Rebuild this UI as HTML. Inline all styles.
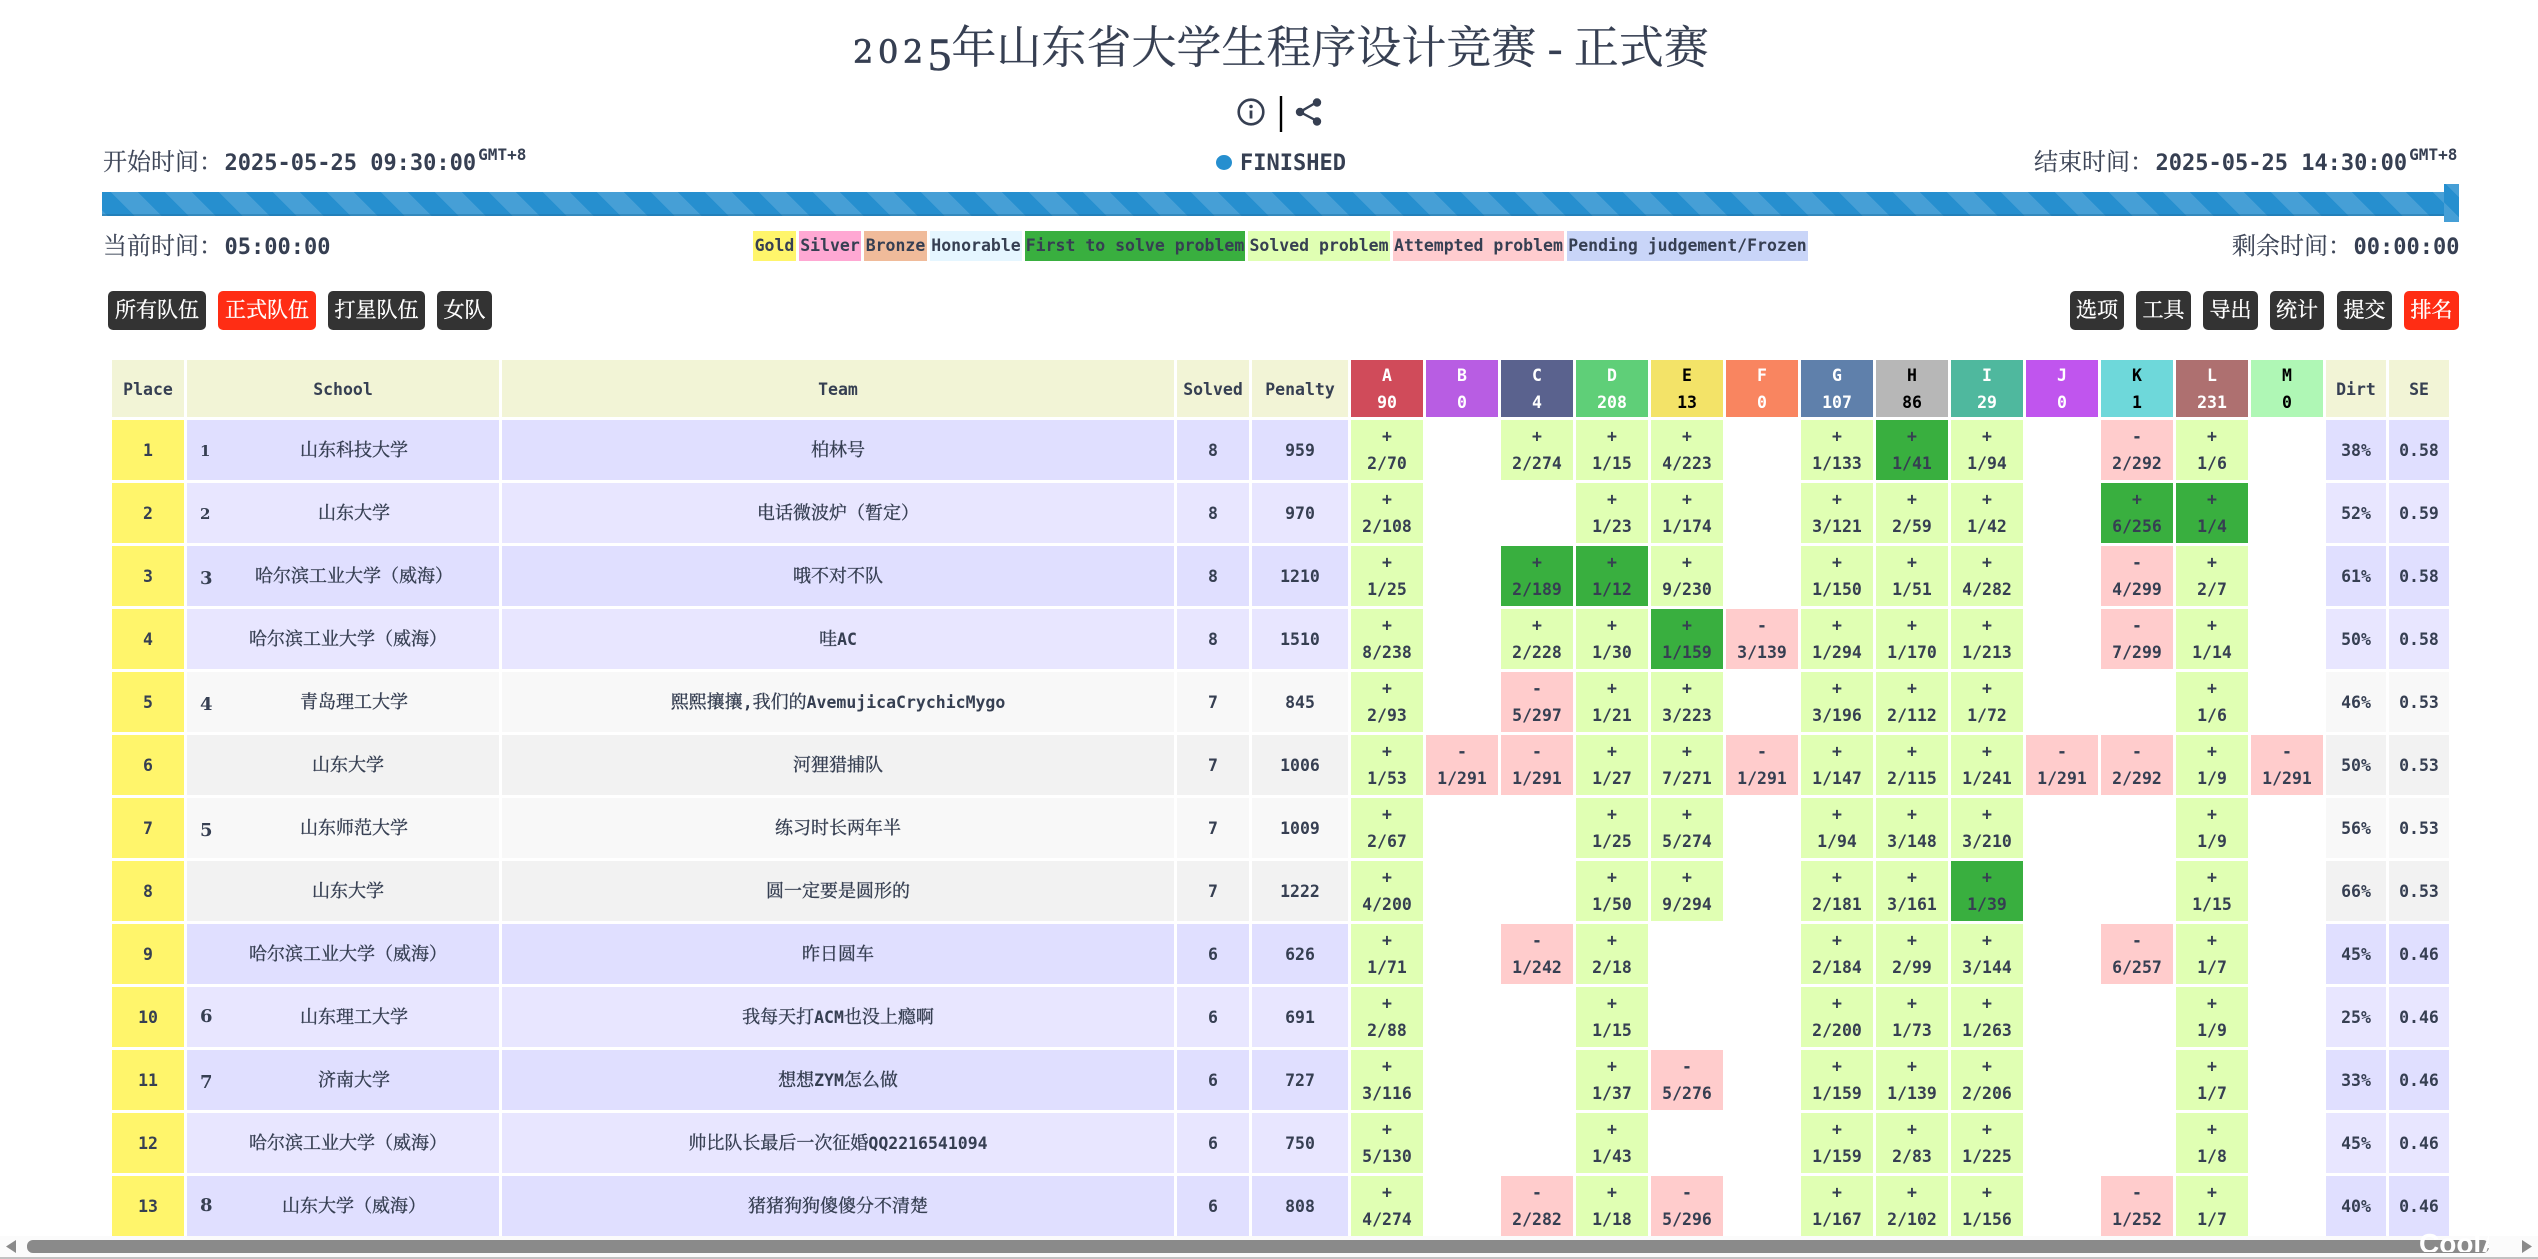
<!DOCTYPE html>
<html lang="zh"><head><meta charset="utf-8"><title>2025年山东省大学生程序设计竞赛 - 正式赛</title>
<style>
html,body{margin:0;padding:0;background:#fff;width:2538px;height:1259px;overflow:hidden}
body{position:relative;color:#363f52;font-family:"DejaVu Sans Mono","Noto Serif CJK SC",monospace}
.abs{position:absolute;white-space:nowrap}
i{font-style:normal;font-weight:400;font-family:"Noto Serif CJK SC","Liberation Serif",serif;line-height:0}
#title{left:853px;top:14px;font:400 45px/60px "Noto Serif CJK SC",serif;-webkit-text-stroke:.2px #363f52}
#title span{line-height:0}
.time{font:bold 22px/30px "DejaVu Sans Mono",monospace}
.time i{font-size:24px;color:#3e4658;-webkit-text-stroke:.15px #3e4658;margin-right:1.5px}
.time sup{font-size:16px;line-height:0;vertical-align:baseline;position:relative;top:-10px;margin-left:2px}
.lg{position:absolute;top:231px;height:30px;font:bold 16.5px/29px "DejaVu Sans Mono",monospace;text-align:center;white-space:nowrap;overflow:hidden}
.btn{position:absolute;top:291px;height:39px;background:#333;color:#fff;border-radius:5px;text-align:center;font:400 21px/36px "Noto Serif CJK SC",serif;-webkit-text-stroke:.35px #fff}
.red{background:#ff2d14}
#bar{left:102px;top:192px;width:2357px;height:24px;background:repeating-linear-gradient(45deg,#469fd6 0 4.24px,#268fcf 4.24px 23.33px,#469fd6 23.33px 38.18px);box-shadow:inset 0 -2px 0 rgba(30,110,160,.45)}
#thumb{left:2444px;top:184px;width:15px;height:38px;background:repeating-linear-gradient(45deg,#469fd6 0 14px,#268fcf 14px 28px)}
table{position:absolute;left:109px;top:357px;border-collapse:separate;border-spacing:3px;table-layout:fixed;width:2343px}
td,th{padding:0;text-align:center;vertical-align:middle;font:bold 16.5px/27px "DejaVu Sans Mono","Noto Serif CJK SC",monospace;overflow:hidden;white-space:nowrap;position:relative}
thead tr{height:57px}
thead th{background:#f2f4d6;padding-top:1px}
th.w{color:#fff}th.k{color:#000}
tbody tr{height:60px}
td i{font-size:18px;-webkit-text-stroke:.35px #363f52}
.p{background:#fff56b}
.s{background:#e0ffb3}.a{background:#ffcccc}.f{background:#39af3f}
.v1{background:#e0dfff}.v2{background:#e8e6ff}.g1{background:#f8f8f8}.g2{background:#f2f2f2}
.sc{padding-left:10px}.sr{padding-left:22px}
.r{position:absolute;left:13px;line-height:20px;font-family:"DejaVu Serif",serif;font-weight:bold}
.r1{font-size:15px;top:21px}.r2{font-size:18px;top:23px}.r3{font-size:18px;top:20px}
</style></head><body>

<div class="abs" id="title"><span style="font:400 32px 'DejaVu Serif',serif;letter-spacing:4.6px;line-height:0;-webkit-text-stroke:.7px #363f52">202</span><span style="font:400 47px 'Liberation Serif',serif;line-height:0;position:relative;top:7px;-webkit-text-stroke:.6px #363f52">5</span>年山东省大学生程序设计竞赛<span style="font:400 45px 'Liberation Serif',serif;line-height:0"> - </span>正式赛</div>

<svg class="abs" style="left:1230px;top:90px" width="100" height="50" viewBox="1230 90 100 50" fill="none">
<circle cx="1251" cy="112" r="12.3" stroke="#363f52" stroke-width="2.6"/>
<circle cx="1251" cy="106.5" r="1.8" fill="#363f52"/>
<path d="M1251 110.5V118.5" stroke="#363f52" stroke-width="2.8"/>
<path d="M1281 96V132" stroke="#000" stroke-width="2.4"/>
<path d="M1317 102L1300 112L1317 121" stroke="#363f52" stroke-width="2.4"/>
<circle cx="1317" cy="102.5" r="4.2" fill="#363f52"/><circle cx="1300" cy="112" r="4.2" fill="#363f52"/><circle cx="1317" cy="121.5" r="4.2" fill="#363f52"/>
</svg>

<div class="abs time" style="left:103px;top:149px"><i>开始时间：</i>2025-05-25 09:30:00<sup>GMT+8</sup></div>
<div class="abs" style="left:1216px;top:155px;width:16px;height:15px;border-radius:50%;background:#268fcf"></div>
<div class="abs time" style="left:1240px;top:149px">FINISHED</div>
<div class="abs time" style="left:2034px;top:149px"><i>结束时间：</i>2025-05-25 14:30:00<sup>GMT+8</sup></div>

<div class="abs" id="bar"></div><div class="abs" id="thumb"></div>

<div class="abs time" style="left:103px;top:233px"><i>当前时间：</i>05:00:00</div>
<div class="abs time" style="left:2232px;top:233px"><i>剩余时间：</i>00:00:00</div>

<div class="lg" style="left:753px;width:43px;background:#fff56b">Gold</div>
<div class="lg" style="left:799px;width:62px;background:#ffa8d3">Silver</div>
<div class="lg" style="left:864px;width:63px;background:#f0bb9a">Bronze</div>
<div class="lg" style="left:930px;width:92px;background:#e5f6ff">Honorable</div>
<div class="lg" style="left:1025px;width:220px;background:#39af3f">First to solve problem</div>
<div class="lg" style="left:1248px;width:142px;background:#e0ffb3">Solved problem</div>
<div class="lg" style="left:1393px;width:171px;background:#ffcccf">Attempted problem</div>
<div class="lg" style="left:1567px;width:241px;background:#c9d5f8">Pending judgement/Frozen</div>

<div class="btn" style="left:108px;width:98px">所有队伍</div>
<div class="btn red" style="left:218px;width:98px">正式队伍</div>
<div class="btn" style="left:328px;width:97px">打星队伍</div>
<div class="btn" style="left:437px;width:55px">女队</div>
<div class="btn" style="left:2070px;width:54px">选项</div>
<div class="btn" style="left:2136px;width:55px">工具</div>
<div class="btn" style="left:2203px;width:55px">导出</div>
<div class="btn" style="left:2270px;width:54px">统计</div>
<div class="btn" style="left:2337px;width:55px">提交</div>
<div class="btn red" style="left:2404px;width:55px">排名</div>

<table>
<colgroup><col style="width:72px"><col style="width:312px"><col style="width:672px"><col style="width:72px"><col style="width:96px"><col style="width:72px"><col style="width:72px"><col style="width:72px"><col style="width:72px"><col style="width:72px"><col style="width:72px"><col style="width:72px"><col style="width:72px"><col style="width:72px"><col style="width:72px"><col style="width:72px"><col style="width:72px"><col style="width:72px"><col style="width:60px"><col style="width:60px"></colgroup>
<thead><tr><th>Place</th><th>School</th><th>Team</th><th>Solved</th><th>Penalty</th>
<th class="w" style="background:#d04b5a">A<br>90</th>
<th class="w" style="background:#b85de3">B<br>0</th>
<th class="w" style="background:#5a628e">C<br>4</th>
<th class="w" style="background:#5fcf78">D<br>208</th>
<th class="k" style="background:#f3e368">E<br>13</th>
<th class="w" style="background:#f98560">F<br>0</th>
<th class="w" style="background:#5f80ab">G<br>107</th>
<th class="k" style="background:#b7b7b7">H<br>86</th>
<th class="w" style="background:#4fb89e">I<br>29</th>
<th class="w" style="background:#c055ee">J<br>0</th>
<th class="k" style="background:#6ed8da">K<br>1</th>
<th class="w" style="background:#ae7070">L<br>231</th>
<th class="k" style="background:#aff7b5">M<br>0</th>
<th>Dirt</th><th>SE</th></tr></thead>
<tbody>
<tr><td class="p">1</td><td class="v1 sr"><span class="r r1">1</span><i>山东科技大学</i></td><td class="v1"><i>柏林号</i></td><td class="v1">8</td><td class="v1">959</td>
<td class="s">+<br>2/70</td><td></td><td class="s">+<br>2/274</td><td class="s">+<br>1/15</td><td class="s">+<br>4/223</td><td></td><td class="s">+<br>1/133</td><td class="f">+<br>1/41</td><td class="s">+<br>1/94</td><td></td><td class="a">-<br>2/292</td><td class="s">+<br>1/6</td><td></td><td class="v1">38%</td><td class="v1">0.58</td></tr>
<tr><td class="p">2</td><td class="v2 sr"><span class="r r1">2</span><i>山东大学</i></td><td class="v2"><i>电话微波炉（暂定）</i></td><td class="v2">8</td><td class="v2">970</td>
<td class="s">+<br>2/108</td><td></td><td></td><td class="s">+<br>1/23</td><td class="s">+<br>1/174</td><td></td><td class="s">+<br>3/121</td><td class="s">+<br>2/59</td><td class="s">+<br>1/42</td><td></td><td class="f">+<br>6/256</td><td class="f">+<br>1/4</td><td></td><td class="v2">52%</td><td class="v2">0.59</td></tr>
<tr><td class="p">3</td><td class="v1 sr"><span class="r r2">3</span><i>哈尔滨工业大学（威海）</i></td><td class="v1"><i>哦不对不队</i></td><td class="v1">8</td><td class="v1">1210</td>
<td class="s">+<br>1/25</td><td></td><td class="f">+<br>2/189</td><td class="f">+<br>1/12</td><td class="s">+<br>9/230</td><td></td><td class="s">+<br>1/150</td><td class="s">+<br>1/51</td><td class="s">+<br>4/282</td><td></td><td class="a">-<br>4/299</td><td class="s">+<br>2/7</td><td></td><td class="v1">61%</td><td class="v1">0.58</td></tr>
<tr><td class="p">4</td><td class="v2 sc"><i>哈尔滨工业大学（威海）</i></td><td class="v2"><i>哇</i>AC</td><td class="v2">8</td><td class="v2">1510</td>
<td class="s">+<br>8/238</td><td></td><td class="s">+<br>2/228</td><td class="s">+<br>1/30</td><td class="f">+<br>1/159</td><td class="a">-<br>3/139</td><td class="s">+<br>1/294</td><td class="s">+<br>1/170</td><td class="s">+<br>1/213</td><td></td><td class="a">-<br>7/299</td><td class="s">+<br>1/14</td><td></td><td class="v2">50%</td><td class="v2">0.58</td></tr>
<tr><td class="p">5</td><td class="g1 sr"><span class="r r2">4</span><i>青岛理工大学</i></td><td class="g1"><i>熙熙攘攘</i>,<i>我们的</i>AvemujicaCrychicMygo</td><td class="g1">7</td><td class="g1">845</td>
<td class="s">+<br>2/93</td><td></td><td class="a">-<br>5/297</td><td class="s">+<br>1/21</td><td class="s">+<br>3/223</td><td></td><td class="s">+<br>3/196</td><td class="s">+<br>2/112</td><td class="s">+<br>1/72</td><td></td><td></td><td class="s">+<br>1/6</td><td></td><td class="g1">46%</td><td class="g1">0.53</td></tr>
<tr><td class="p">6</td><td class="g2 sc"><i>山东大学</i></td><td class="g2"><i>河狸猎捕队</i></td><td class="g2">7</td><td class="g2">1006</td>
<td class="s">+<br>1/53</td><td class="a">-<br>1/291</td><td class="a">-<br>1/291</td><td class="s">+<br>1/27</td><td class="s">+<br>7/271</td><td class="a">-<br>1/291</td><td class="s">+<br>1/147</td><td class="s">+<br>2/115</td><td class="s">+<br>1/241</td><td class="a">-<br>1/291</td><td class="a">-<br>2/292</td><td class="s">+<br>1/9</td><td class="a">-<br>1/291</td><td class="g2">50%</td><td class="g2">0.53</td></tr>
<tr><td class="p">7</td><td class="g1 sr"><span class="r r2">5</span><i>山东师范大学</i></td><td class="g1"><i>练习时长两年半</i></td><td class="g1">7</td><td class="g1">1009</td>
<td class="s">+<br>2/67</td><td></td><td></td><td class="s">+<br>1/25</td><td class="s">+<br>5/274</td><td></td><td class="s">+<br>1/94</td><td class="s">+<br>3/148</td><td class="s">+<br>3/210</td><td></td><td></td><td class="s">+<br>1/9</td><td></td><td class="g1">56%</td><td class="g1">0.53</td></tr>
<tr><td class="p">8</td><td class="g2 sc"><i>山东大学</i></td><td class="g2"><i>圆一定要是圆形的</i></td><td class="g2">7</td><td class="g2">1222</td>
<td class="s">+<br>4/200</td><td></td><td></td><td class="s">+<br>1/50</td><td class="s">+<br>9/294</td><td></td><td class="s">+<br>2/181</td><td class="s">+<br>3/161</td><td class="f">+<br>1/39</td><td></td><td></td><td class="s">+<br>1/15</td><td></td><td class="g2">66%</td><td class="g2">0.53</td></tr>
<tr><td class="p">9</td><td class="v1 sc"><i>哈尔滨工业大学（威海）</i></td><td class="v1"><i>昨日圆车</i></td><td class="v1">6</td><td class="v1">626</td>
<td class="s">+<br>1/71</td><td></td><td class="a">-<br>1/242</td><td class="s">+<br>2/18</td><td></td><td></td><td class="s">+<br>2/184</td><td class="s">+<br>2/99</td><td class="s">+<br>3/144</td><td></td><td class="a">-<br>6/257</td><td class="s">+<br>1/7</td><td></td><td class="v1">45%</td><td class="v1">0.46</td></tr>
<tr><td class="p">10</td><td class="v2 sr"><span class="r r3">6</span><i>山东理工大学</i></td><td class="v2"><i>我每天打</i>ACM<i>也没上瘾啊</i></td><td class="v2">6</td><td class="v2">691</td>
<td class="s">+<br>2/88</td><td></td><td></td><td class="s">+<br>1/15</td><td></td><td></td><td class="s">+<br>2/200</td><td class="s">+<br>1/73</td><td class="s">+<br>1/263</td><td></td><td></td><td class="s">+<br>1/9</td><td></td><td class="v2">25%</td><td class="v2">0.46</td></tr>
<tr><td class="p">11</td><td class="v1 sr"><span class="r r2">7</span><i>济南大学</i></td><td class="v1"><i>想想</i>ZYM<i>怎么做</i></td><td class="v1">6</td><td class="v1">727</td>
<td class="s">+<br>3/116</td><td></td><td></td><td class="s">+<br>1/37</td><td class="a">-<br>5/276</td><td></td><td class="s">+<br>1/159</td><td class="s">+<br>1/139</td><td class="s">+<br>2/206</td><td></td><td></td><td class="s">+<br>1/7</td><td></td><td class="v1">33%</td><td class="v1">0.46</td></tr>
<tr><td class="p">12</td><td class="v2 sc"><i>哈尔滨工业大学（威海）</i></td><td class="v2"><i>帅比队长最后一次征婚</i>QQ2216541094</td><td class="v2">6</td><td class="v2">750</td>
<td class="s">+<br>5/130</td><td></td><td></td><td class="s">+<br>1/43</td><td></td><td></td><td class="s">+<br>1/159</td><td class="s">+<br>2/83</td><td class="s">+<br>1/225</td><td></td><td></td><td class="s">+<br>1/8</td><td></td><td class="v2">45%</td><td class="v2">0.46</td></tr>
<tr><td class="p">13</td><td class="v1 sr"><span class="r r3">8</span><i>山东大学（威海）</i></td><td class="v1"><i>猪猪狗狗傻傻分不清楚</i></td><td class="v1">6</td><td class="v1">808</td>
<td class="s">+<br>4/274</td><td></td><td class="a">-<br>2/282</td><td class="s">+<br>1/18</td><td class="a">-<br>5/296</td><td></td><td class="s">+<br>1/167</td><td class="s">+<br>2/102</td><td class="s">+<br>1/156</td><td></td><td class="a">-<br>1/252</td><td class="s">+<br>1/7</td><td></td><td class="v1">40%</td><td class="v1">0.46</td></tr>
</tbody></table>

<div class="abs" style="left:0;top:1236px;width:2538px;height:21px;background:#fbfbfb"></div>
<div class="abs" style="left:0;top:1257px;width:2538px;height:2px;background:#c2c2c2"></div>
<div class="abs" style="left:27px;top:1240px;width:2462px;height:13px;border-radius:6px;background:#8a8a8a"></div>
<svg class="abs" style="left:0;top:1236px" width="30" height="21" viewBox="0 0 30 21"><path d="M6 10.5L16 4V17Z" fill="#8a8a8a"/></svg>
<svg class="abs" style="left:2515px;top:1236px" width="23" height="21" viewBox="0 0 23 21"><path d="M7 4L17 10.5L7 17Z" fill="#8a8a8a"/></svg>
<div class="abs" style="left:2419px;top:1232px;width:70px;height:20px;overflow:hidden;color:#fff;font:bold 28px/24px 'Liberation Sans',sans-serif">CoolA</div>
</body></html>
